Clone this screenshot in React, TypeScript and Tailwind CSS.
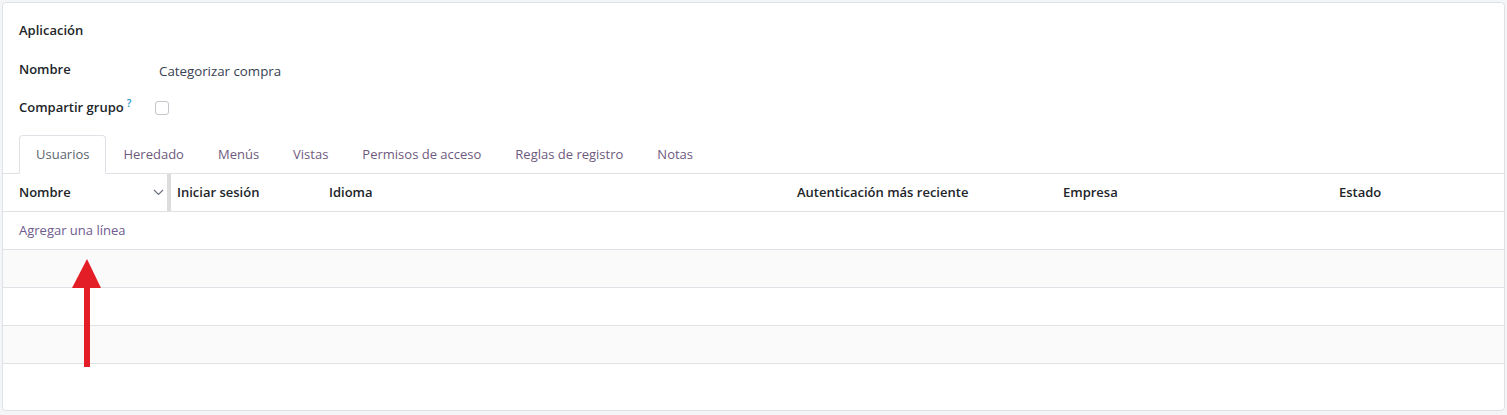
import React from "react";

const tabs = ["Usuarios", "Heredado", "Menús", "Vistas", "Permisos de acceso", "Reglas de registro", "Notas"];

function Chevron() {
  return (
    <svg width="11" height="7" viewBox="0 0 11 7" fill="none" className="mr-[3px]">
      <path d="M1 1l4.5 4.5L10 1" stroke="#6b7280" strokeWidth="1.2" />
    </svg>
  );
}

function RedArrow() {
  return (
    <svg
      width="40"
      height="112"
      viewBox="0 0 40 112"
      className="absolute left-[67px] top-[257px] pointer-events-none"
    >
      <polygon points="20,2 34,31 5,31" fill="#e41e26" />
      <rect x="17" y="30" width="6" height="80" fill="#e41e26" />
    </svg>
  );
}

export default function App() {
  return (
    <div
      className="relative min-h-screen bg-[#f4f5f7] p-[2px] text-[13px] text-[#212529]"
      style={{ fontFamily: '"Open Sans", "Noto Sans", sans-serif' }}
    >
      <div className="h-[409px] rounded-[4px] border border-[#dee2e6] bg-white">
        {/* form fields */}
        <div className="px-4 pt-[16px]">
          <div className="flex h-[24px] items-center font-semibold">Aplicación</div>
          <div className="mt-[15px] flex h-[24px] items-center">
            <span className="w-[140px] font-semibold">Nombre</span>
            <span className="mt-[3px] text-[13.3px] text-[#374151]">Categorizar compra</span>
          </div>
          <div className="mt-[14px] flex h-[24px] items-center">
            <span className="w-[136px] font-semibold">
              Compartir grupo<sup className="ml-[3px] text-[10px] font-semibold text-[#1b93c8]">?</sup>
            </span>
            <span className="h-[14px] w-[14px] rounded-[3px] border border-[#c4c8cc] bg-white" />
          </div>
        </div>

        {/* tabs */}
        <div className="mt-[15px] flex border-b border-[#dee2e6] pl-4">
          {tabs.map((t, i) => (
            <div
              key={t}
              className={
                i === 0
                  ? "-mb-px flex h-[39px] items-center rounded-t-[4px] border border-[#dee2e6] border-b-white bg-white px-4 text-[#5c6670]"
                  : "-mb-px flex h-[39px] items-center border border-transparent px-4 text-[#6e5a7e]"
              }
            >
              {t}
            </div>
          ))}
        </div>

        {/* table */}
        <div className="grid h-[38px] grid-cols-[164px_4px_152px_468px_266px_276px_1fr] items-center border-b border-[#dee2e6] font-semibold">
          <div className="flex items-center justify-between pl-4">
            <span>Nombre</span>
            <Chevron />
          </div>
          <div className="h-full bg-[#dcdcdc]" />
          <div className="pl-[6px]">Iniciar sesión</div>
          <div className="pl-[6px]">Idioma</div>
          <div className="pl-[6px]">Autenticación más reciente</div>
          <div className="pl-[6px]">Empresa</div>
          <div className="pl-[6px]">Estado</div>
        </div>
        <div className="flex h-[38px] items-center border-b border-[#dee2e6] pl-4 text-[#6e5a8e]">
          Agregar una línea
        </div>
        <div className="h-[38px] border-b border-[#dee2e6] bg-[#fafafa]" />
        <div className="h-[38px] border-b border-[#dee2e6] bg-white" />
        <div className="h-[38px] border-b border-[#dee2e6] bg-[#fafafa]" />
      </div>
      <RedArrow />
    </div>
  );
}
